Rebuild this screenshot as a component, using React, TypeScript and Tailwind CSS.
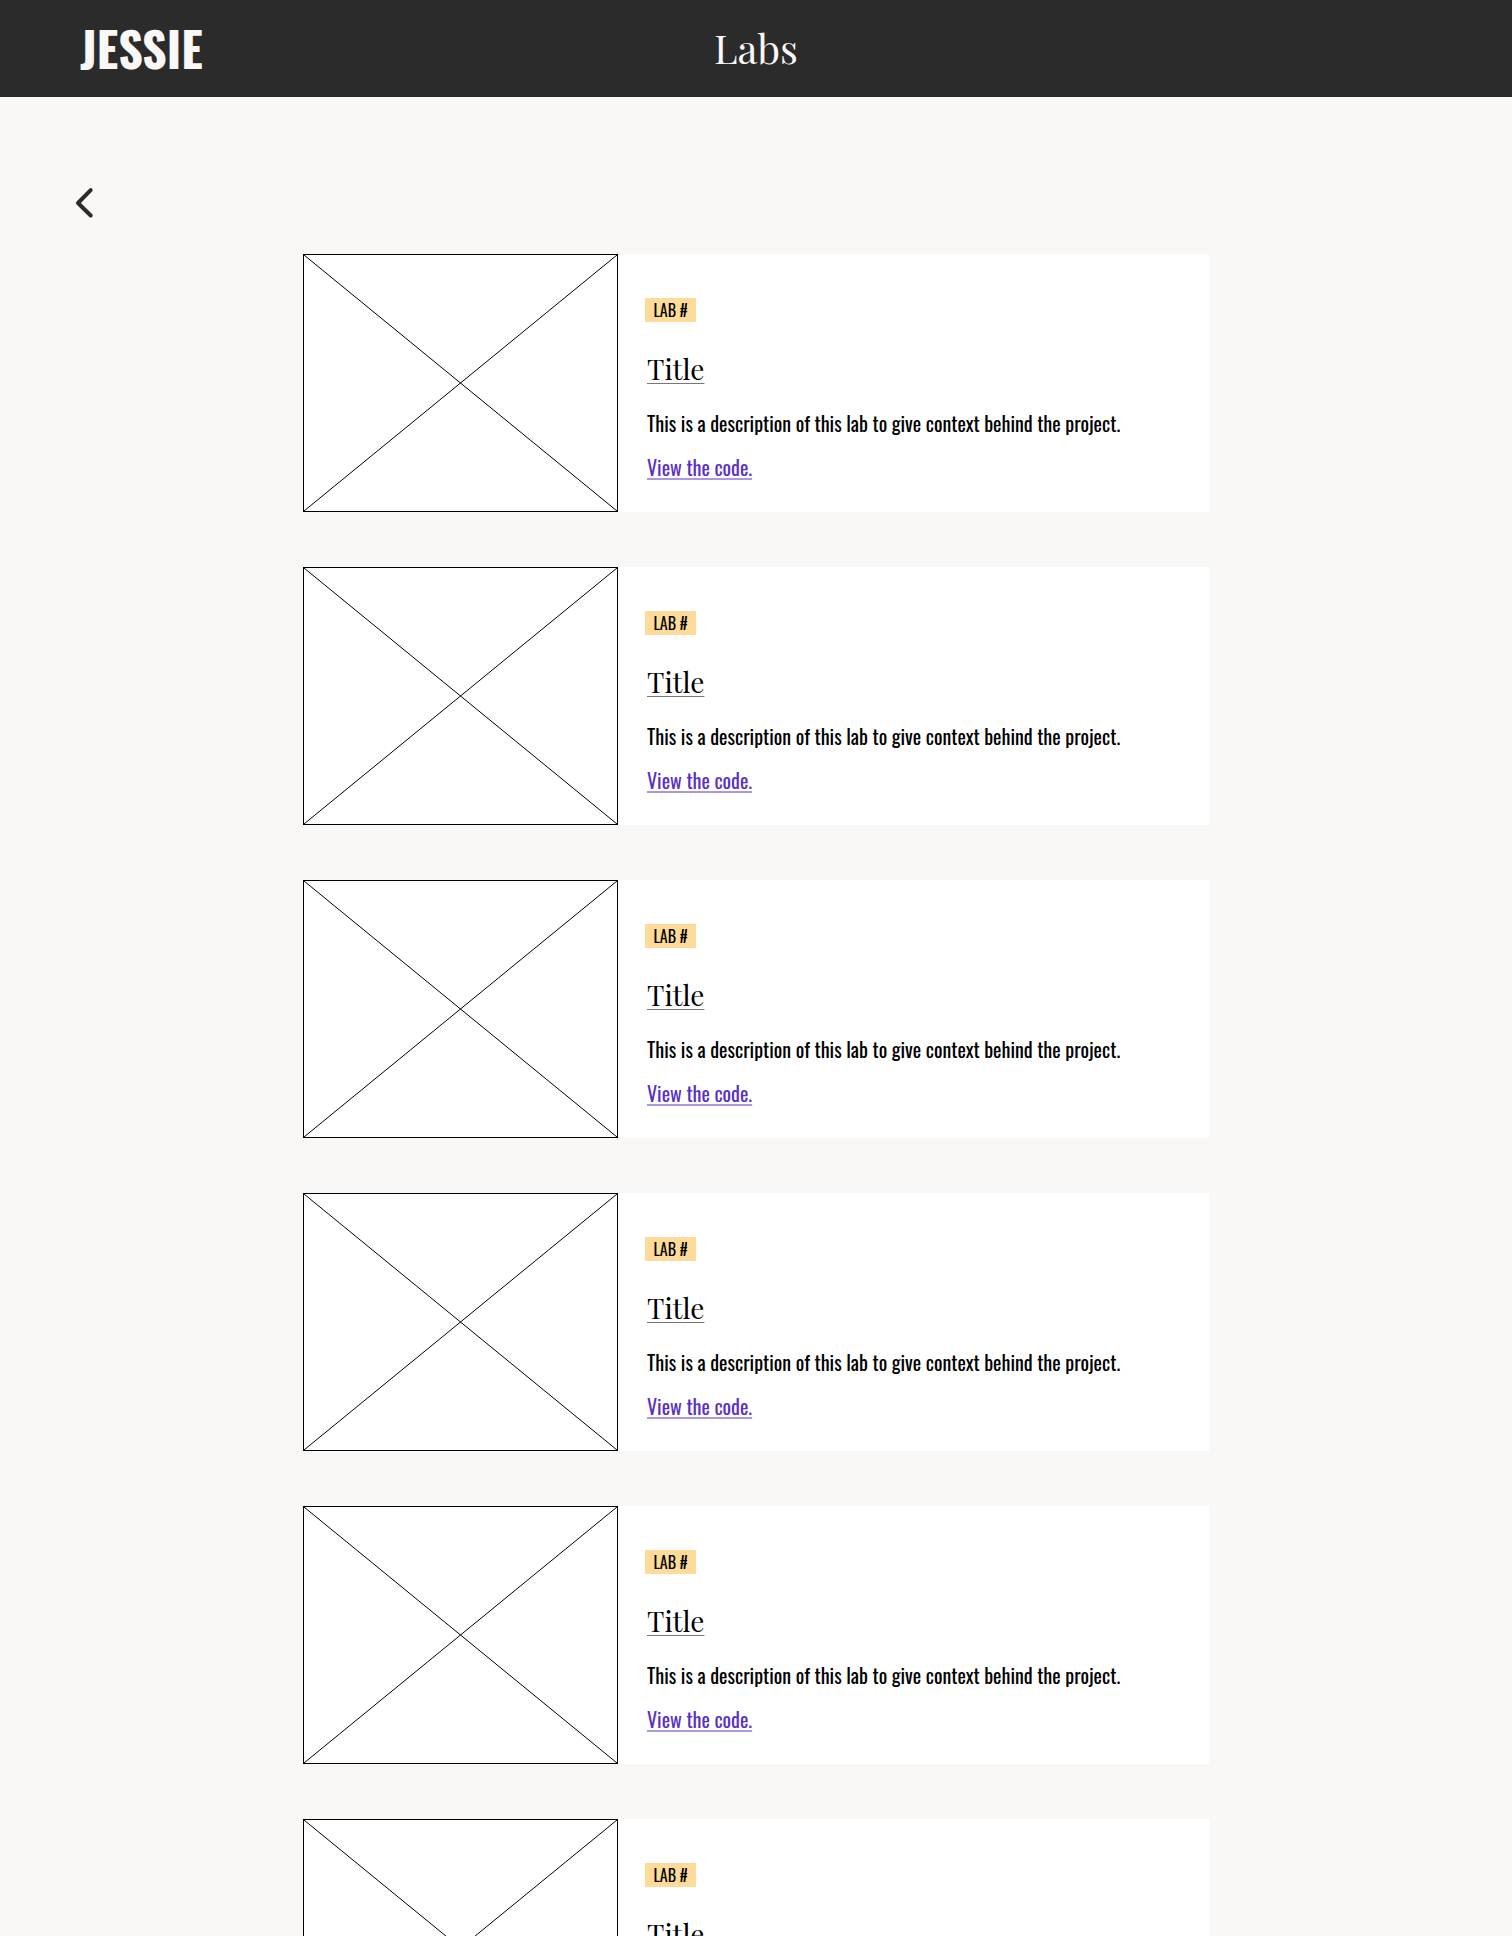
const sans = "font-['Oswald','Liberation_Sans_Narrow','Roboto_Condensed','Roboto',sans-serif]";
const serif = "font-['Playfair_Display','Liberation_Serif',serif]";

const labs = [1, 2, 3, 4, 5, 6];

function Placeholder() {
  return (
    <div className="w-[315px] shrink-0 border border-black">
      <svg className="block w-full" viewBox="0 0 313 256" aria-hidden="true">
        <path d="M0 0 313 256M313 0 0 256" fill="none" stroke="#000" strokeWidth="1" />
      </svg>
    </div>
  );
}

function LabCard() {
  return (
    <article className="flex bg-white">
      <Placeholder />
      <div className="flex flex-col items-start pt-11 pl-[27px]">
        <span className="min-w-[51px] bg-[#ffdb99] px-2 text-center text-base leading-6 text-black">LAB #</span>
        <h2 className={`${serif} mt-[27px] ml-0.5 text-[28px] leading-10 text-black`}>
          <a href="#title" className="underline decoration-[#777] decoration-1 underline-offset-3">Title</a>
        </h2>
        <p className="mt-[18px] ml-0.5 text-xl leading-8 text-black">
          This is a description of this lab to give context behind the project.
        </p>
        <a href="#code" className="mt-3 ml-0.5 text-xl leading-8 text-[#5a31c4] underline decoration-[#ad96e2] decoration-2 underline-offset-2">
          View the code.
        </a>
      </div>
    </article>
  );
}

export default function App() {
  return (
    <div className={`${sans} min-h-screen bg-[#f9f8f6] pb-14`}>
      <header className="grid h-[97px] grid-cols-3 items-center bg-[#2b2b2b] px-20 text-[#f9f8f6]">
        <a href="#home" className="pb-0.5 text-5xl font-bold">JESSIE</a>
        <h1 className={`${serif} pb-0.5 text-center text-[40px]`}>Labs</h1>
      </header>
      <nav className="flex px-[75px] pt-[90px]">
        <button type="button" aria-label="Back" className="text-[#2b2b2b]">
          <svg width="20" height="32" viewBox="0 0 20 32" fill="none" stroke="currentColor" strokeWidth="4" strokeLinecap="round" strokeLinejoin="round" aria-hidden="true">
            <path d="M15.700 3.200 3 16 15.700 28.500" />
          </svg>
        </button>
      </nav>
      <main className="mx-auto mt-[35px] flex w-full max-w-[906px] flex-col gap-[55px]">
        {labs.map((lab) => (
          <LabCard key={lab} />
        ))}
      </main>
    </div>
  );
}
